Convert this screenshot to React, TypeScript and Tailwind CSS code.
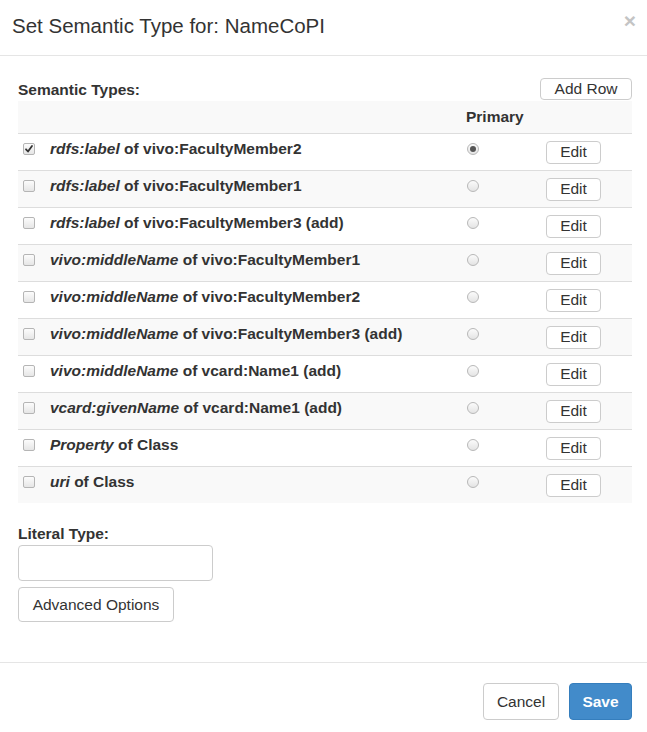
import { useState } from 'react'

type Row = {
  prop: string
  rest: string
}

const rows: Row[] = [
  { prop: 'rdfs:label', rest: 'of vivo:FacultyMember2' },
  { prop: 'rdfs:label', rest: 'of vivo:FacultyMember1' },
  { prop: 'rdfs:label', rest: 'of vivo:FacultyMember3 (add)' },
  { prop: 'vivo:middleName', rest: 'of vivo:FacultyMember1' },
  { prop: 'vivo:middleName', rest: 'of vivo:FacultyMember2' },
  { prop: 'vivo:middleName', rest: 'of vivo:FacultyMember3 (add)' },
  { prop: 'vivo:middleName', rest: 'of vcard:Name1 (add)' },
  { prop: 'vcard:givenName', rest: 'of vcard:Name1 (add)' },
  { prop: 'Property', rest: 'of Class' },
  { prop: 'uri', rest: 'of Class' },
]

function Check({ on }: { on: boolean }) {
  return (
    <span className="relative inline-block w-[12px] h-[12px] rounded-[2px] border border-[#b5b5b5] bg-gradient-to-b from-[#fcfcfc] to-[#e6e6e6]">
      {on && (
        <svg viewBox="0 0 12 12" className="absolute -left-px -top-px w-[12px] h-[12px]">
          <path d="M3 6.3 L5 8.5 L9 3" fill="none" stroke="#333" strokeWidth="1.8" strokeLinecap="round" strokeLinejoin="round" />
        </svg>
      )}
    </span>
  )
}

function Radio({ on }: { on: boolean }) {
  return (
    <span className="inline-flex items-center justify-center w-[12px] h-[12px] rounded-full border border-[#b8b8b8] bg-gradient-to-b from-[#fbfbfb] to-[#e4e4e4]">
      {on && <span className="w-[6px] h-[6px] rounded-full bg-[#555]" />}
    </span>
  )
}

export default function App() {
  const [primary] = useState(0)

  return (
    <div className="w-[647px] h-[732px] bg-white text-[#333] text-[15.5px] font-['Liberation_Sans',Arial,sans-serif]">
      {/* header */}
      <div className="h-[56px] border-b border-[#e5e5e5] flex items-center justify-between pl-[12px] pr-[11px]">
        <h4 className="text-[20.5px] leading-[25px] mt-[-5px]">Set Semantic Type for: NameCoPI</h4>
        <span className="text-[21px] font-bold leading-none text-[#c4c4c4] mt-[-14px]">×</span>
      </div>

      {/* body */}
      <div className="pl-[18px] pr-[15px] pt-[22px] h-[606px]">
        <div className="flex items-end justify-between h-[22px]">
          <span className="font-bold leading-[20px]">Semantic Types:</span>
          <button className="h-[22px] w-[92px] border border-[#ccc] rounded-[4px] bg-white leading-none">Add Row</button>
        </div>

        <div className="mt-[1px]">
          <div className="flex h-[32px] items-center bg-[#f9f9f9] font-bold">
            <div className="w-[448px]" />
            <div className="w-[80px]">Primary</div>
          </div>
          {rows.map((r, i) => (
            <div
              key={i}
              className={`flex h-[37px] items-center border-t border-[#ddd] font-bold ${i % 2 === 1 ? 'bg-[#f9f9f9]' : 'bg-white'}`}
            >
              <div className="w-[32px] pl-[5px] flex items-center -mt-[6px]">
                <Check on={i === 0} />
              </div>
              <div className="w-[416px] leading-[20px] -mt-[6px]">
                <i>{r.prop}</i> {r.rest}
              </div>
              <div className="w-[80px] pl-[1px] flex items-center -mt-[7px]">
                <Radio on={i === primary} />
              </div>
              <div className="flex items-center">
                <button className="w-[55px] h-[23px] border border-[#ccc] rounded-[4px] bg-white font-normal leading-none">Edit</button>
              </div>
            </div>
          ))}
        </div>

        <div className="mt-[21px] font-bold leading-[20px]">Literal Type:</div>
        <input className="block w-[195px] h-[36px] border border-[#ccc] rounded-[4px] mt-[1px] outline-none" />
        <button className="mt-[6px] h-[35px] w-[156px] border border-[#ccc] rounded-[4px] bg-white">Advanced Options</button>
      </div>

      {/* footer */}
      <div className="border-t border-[#e5e5e5] flex justify-end gap-[10px] pr-[15px] pt-[20px]">
        <button className="h-[37px] w-[76px] border border-[#ccc] rounded-[4px] bg-white">Cancel</button>
        <button className="h-[37px] w-[63px] border border-[#357ebd] rounded-[4px] bg-[#428bca] text-white font-bold">Save</button>
      </div>
    </div>
  )
}
